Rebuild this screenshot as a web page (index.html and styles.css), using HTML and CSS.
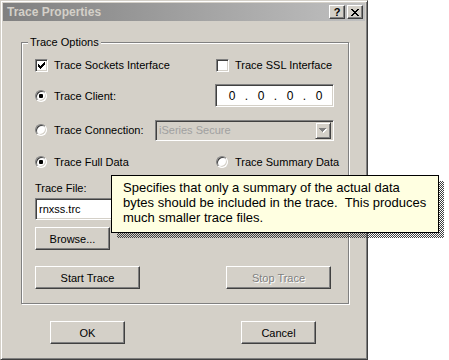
FILE: index.html
```html
<!DOCTYPE html>
<html lang="en">
<head>
  <meta charset="UTF-8" />
  <title>Trace Properties</title>
  <link rel="stylesheet" href="styles.css">
</head>
<body>
  <div class="dialog">
    <div class="titlebar">
      <span class="title">Trace Properties</span>
      <div class="caption-buttons">
        <span class="cap-btn">?</span>
        <span class="cap-btn">
          <svg width="8" height="7" viewBox="0 0 8 7" shape-rendering="crispEdges"><path d="M0 0h2v1h-2zM6 0h2v1h-2zM1 1h2v1h-2zM5 1h2v1h-2zM2 2h4v1h-4zM3 3h2v1h-2zM2 4h4v1h-4zM1 5h2v1h-2zM5 5h2v1h-2zM0 6h2v1h-2zM6 6h2v1h-2z" fill="#000"/></svg>
        </span>
      </div>
    </div>

    <div class="dialog-body">
      <div class="group">
        <span class="group-label">Trace Options</span>

        <div class="row row-1">
          <label class="opt col-a">
            <span class="check">
              <svg width="7" height="7" viewBox="0 0 7 7" shape-rendering="crispEdges"><path d="M0 2h1v3h-1zM1 3h1v3h-1zM2 4h1v3h-1zM3 3h1v3h-1zM4 2h1v3h-1zM5 1h1v3h-1zM6 0h1v3h-1z" fill="#000"/></svg>
            </span>
            Trace Sockets Interface
          </label>
          <label class="opt">
            <span class="check"></span>
            Trace SSL Interface
          </label>
        </div>

        <div class="row row-2">
          <label class="opt radio-opt col-a col-ip"><span class="radio on"></span>Trace Client:</label>
          <div class="sunken ip-field">
            <span>0</span><span>.</span><span>0</span><span>.</span><span>0</span><span>.</span><span>0</span>
          </div>
        </div>

        <div class="row row-3">
          <label class="opt radio-opt col-a col-combo"><span class="radio"></span>Trace Connection:</label>
          <div class="sunken combo">
            <span class="combo-text">iSeries Secure</span>
            <span class="combo-btn">
              <svg width="8" height="5" viewBox="0 0 8 5" shape-rendering="crispEdges"><path d="M1 1h7v1h-1v1h-1v1h-1v1h-1v-1h-1v-1h-1v-1h-1z" fill="#fff"/><path d="M0 0h7v1h-1v1h-1v1h-1v1h-1v-1h-1v-1h-1v-1h-1z" fill="#808080"/></svg>
            </span>
          </div>
        </div>

        <div class="row row-4">
          <label class="opt radio-opt col-a"><span class="radio on"></span>Trace Full Data</label>
          <label class="opt radio-opt"><span class="radio"></span>Trace Summary Data</label>
        </div>

        <div class="file-label">Trace File:</div>
        <div class="sunken file-input">rnxss.trc</div>
        <div class="btn browse">Browse...</div>

        <div class="trace-buttons">
          <div class="btn wide">Start Trace</div>
          <div class="btn wide disabled">Stop Trace</div>
        </div>
      </div>

      <div class="dialog-buttons">
        <div class="btn">OK</div>
        <div class="btn">Cancel</div>
      </div>
    </div>
  </div>

  <div class="tooltip">
    Specifies that only a summary of the actual data<br>
    bytes should be included in the trace.&nbsp; This produces<br>
    much smaller trace files.
  </div>
</body>
</html>
```

FILE: styles.css
```css
body {
  margin: 0;
  background: #fff;
  font-family: "Liberation Sans", Arial, sans-serif;
  font-size: 11px;
  color: #000;
  position: relative;
}

.dialog {
  width: 368px;
  height: 360px;
  box-sizing: border-box;
  background: #d4d0c8;
  border: 1px solid;
  border-color: #d4d0c8 #404040 #404040 #d4d0c8;
  box-shadow: inset 1px 1px #fff, inset -1px -1px #808080;
  padding: 2px;
  display: flex;
  flex-direction: column;
}

.titlebar {
  height: 18px;
  background: linear-gradient(to right, #808080, #c0c0c0);
  display: flex;
  align-items: center;
  justify-content: space-between;
  padding: 0 2px 0 4px;
}
.title {
  color: #d4d0c8;
  font-weight: bold;
  font-size: 12px;
}
.caption-buttons {
  display: flex;
  gap: 2px;
}
.cap-btn {
  width: 16px;
  height: 14px;
  box-sizing: border-box;
  background: #d4d0c8;
  border: 1px solid;
  border-color: #fff #404040 #404040 #fff;
  box-shadow: inset -1px -1px #808080;
  display: flex;
  align-items: center;
  justify-content: center;
  font-weight: bold;
  font-size: 11px;
  line-height: 11px;
}

.dialog-body {
  padding: 21px 0 0 18px;
}

.group {
  position: relative;
  width: 328px;
  box-sizing: border-box;
  border: 1px solid #808080;
  box-shadow: inset 1px 1px #fff, 1px 1px #fff;
  padding: 11px 0 14px 13px;
}
.group-label {
  position: absolute;
  left: 6px;
  top: -7px;
  padding: 0 2px;
  background: #d4d0c8;
  line-height: 13px;
}

.row {
  display: flex;
  align-items: center;
}
.row-1 { height: 22px; }
.row-2 { height: 23px; margin-top: 8px; }
.row-3 { height: 22px; margin-top: 12px; }
.row-4 { height: 22px; margin-top: 10px; }

.opt {
  display: flex;
  align-items: center;
  gap: 6px;
  white-space: nowrap;
}
.radio-opt { gap: 7px; }
.col-a { width: 181px; }
.col-ip { width: 180px; }
.col-combo { width: 120px; }

.check {
  width: 13px;
  height: 13px;
  box-sizing: border-box;
  background: #fff;
  border: 1px solid;
  border-color: #808080 #fff #fff #808080;
  box-shadow: inset 1px 1px #404040, inset -1px -1px #d4d0c8;
  display: flex;
  align-items: center;
  justify-content: center;
}
.radio {
  width: 12px;
  height: 12px;
  box-sizing: border-box;
  border-radius: 50%;
  background: #fff;
  border: 1px solid;
  border-color: #808080 #fff #fff #808080;
  box-shadow: inset 1px 1px #404040, inset -1px -1px #d4d0c8;
  display: flex;
  align-items: center;
  justify-content: center;
}
.radio.on::after {
  content: "";
  width: 4px;
  height: 4px;
  border-radius: 1px;
  background: #000;
}

.sunken {
  box-sizing: border-box;
  border: 1px solid;
  border-color: #808080 #fff #fff #808080;
  box-shadow: inset 1px 1px #404040, inset -1px -1px #d4d0c8;
}

.ip-field {
  width: 119px;
  height: 23px;
  background: #fff;
  display: grid;
  grid-template-columns: 22px 7px 22px 7px 22px 7px 22px;
  align-items: center;
  justify-items: center;
  padding-left: 5px;
  font-size: 12px;
}

.combo {
  width: 179px;
  height: 21px;
  background: #d4d0c8;
  display: flex;
  align-items: center;
  justify-content: space-between;
  padding: 2px;
}
.combo-text {
  color: #a0a0a0;
  padding-left: 1px;
}
.combo-btn {
  width: 16px;
  height: 17px;
  box-sizing: border-box;
  border: 1px solid;
  border-color: #d4d0c8 #404040 #404040 #d4d0c8;
  box-shadow: inset 1px 1px #fff, inset -1px -1px #808080;
  display: flex;
  align-items: center;
  justify-content: center;
}

.file-label {
  margin-top: 9px;
  line-height: 12px;
}
.file-input {
  margin-top: 4px;
  width: 298px;
  height: 22px;
  background: #fff;
  display: flex;
  align-items: center;
  padding-left: 3px;
}

.btn {
  width: 75px;
  height: 23px;
  box-sizing: border-box;
  background: #d4d0c8;
  border: 1px solid;
  border-color: #fff #404040 #404040 #fff;
  box-shadow: inset -1px -1px #808080;
  display: flex;
  align-items: center;
  justify-content: center;
}
.btn.wide { width: 105px; }
.btn.disabled {
  color: #808080;
  text-shadow: 1px 1px #fff;
}
.browse { margin-top: 7px; }

.trace-buttons {
  margin-top: 16px;
  display: flex;
  gap: 86px;
}

.dialog-buttons {
  margin-top: 17px;
  padding-left: 29px;
  display: flex;
  gap: 116px;
}

/* tooltip floats over the dialog, with a dithered drop shadow */
.tooltip {
  position: absolute;
  left: 111px;
  top: 175px;
  width: 328px;
  height: 58px;
  box-sizing: border-box;
  border: 1px solid #000;
  background: #ffffe1;
  padding: 4px 0 0 11px;
  font-size: 13px;
  line-height: 15px;
  white-space: nowrap;
}
.tooltip::before,
.tooltip::after {
  content: "";
  position: absolute;
  background: repeating-conic-gradient(#404040 0 25%, transparent 0 50%) 0 0 / 2px 2px;
}
.tooltip::before {
  left: 327px;
  top: 5px;
  width: 5px;
  height: 57px;
}
.tooltip::after {
  left: 5px;
  top: 57px;
  width: 322px;
  height: 5px;
}
```
